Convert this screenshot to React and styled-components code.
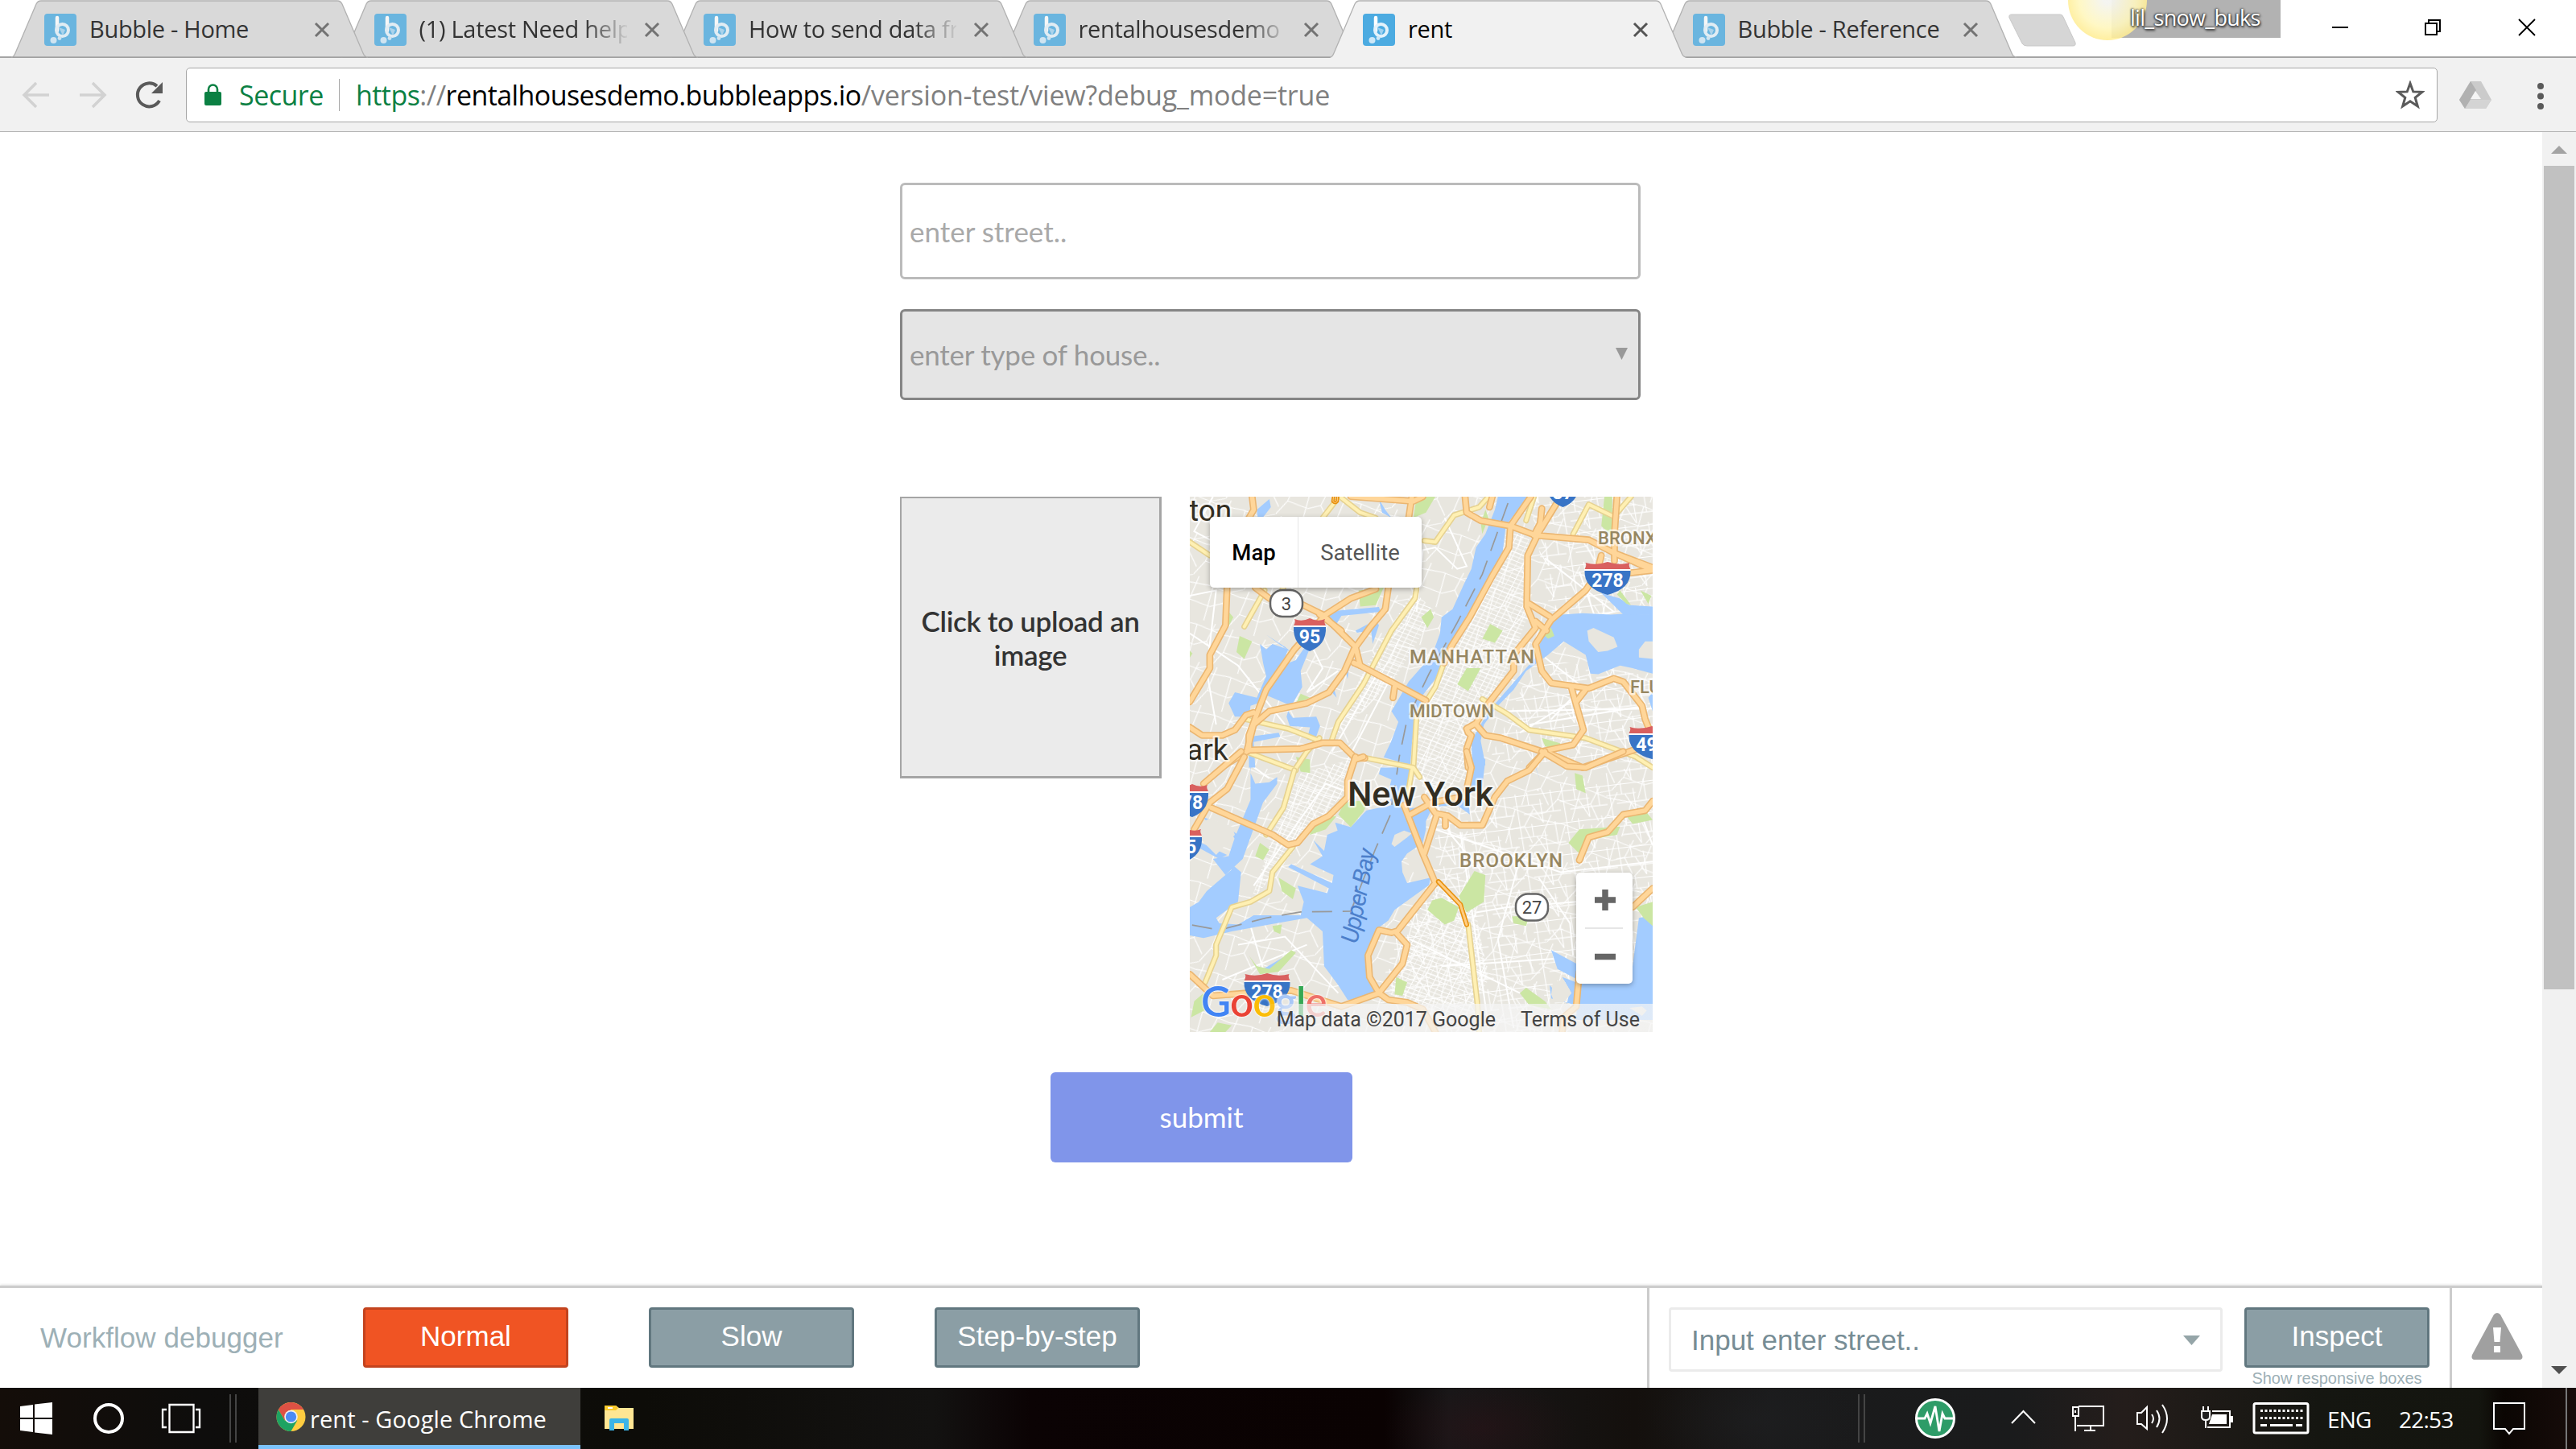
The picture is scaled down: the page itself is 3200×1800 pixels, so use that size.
import React, { useState } from 'react';
import styled, { createGlobalStyle } from 'styled-components';

const GlobalStyle = createGlobalStyle`
  * {
    box-sizing: border-box;
  }
  body {
    margin: 0;
    background: #fff;
    overflow: hidden;
  }
`;

const systemFont = "'Open Sans', 'Noto Sans', sans-serif";
const pageFont = "Lato, sans-serif";
const debugFont = "'Liberation Sans', Arial, sans-serif";
const mapFont = "Roboto, sans-serif";

const Screen = styled.div`
  width: 3200px;
  height: 1800px;
  display: flex;
  flex-direction: column;
  overflow: hidden;
  font-family: ${systemFont};
`;

/* ---------- tab strip ---------- */

const TabStrip = styled.div`
  position: relative;
  height: 72px;
  flex: none;
  display: flex;
  padding-left: 14px;
  background: linear-gradient(#fff 70px, #a5a5a5 70px);
`;

const TabBox = styled.div`
  position: relative;
  z-index: ${(props) => (props.$active ? 20 : 10 - props.$order)};
  width: 443px;
  height: 72px;
  flex: none;
  margin-right: -33.5px;
  padding: 0 40px 0 41px;
  display: flex;
  align-items: center;
`;

const TabShape = styled.svg`
  position: absolute;
  left: 0;
  top: 0;
`;

const Favicon = styled.svg`
  position: relative;
  flex: none;
  margin-top: 2px;
  opacity: ${(props) => (props.$active ? 1 : 0.78)};
`;

const TabTitle = styled.span`
  position: relative;
  width: 258px;
  margin-left: 16px;
  overflow: hidden;
  white-space: nowrap;
  font-size: 29px;
  line-height: 70px;
  letter-spacing: -0.3px;
  color: ${(props) => (props.$active ? '#000' : '#333')};
  ${(props) => props.$fade && 'mask-image: linear-gradient(to right, #000 205px, transparent 262px);'}
`;

const TabClose = styled.svg`
  position: relative;
  flex: none;
  margin: 2px 0 0 21px;
`;

const NewTab = styled.svg`
  flex: none;
  margin: 17px 0 0 24px;
`;

const UserBadge = styled.div`
  position: absolute;
  left: 2623px;
  top: 0;
  width: 210px;
  height: 47px;
  background: #b2b2b2;
`;

const BadgeName = styled.span`
  position: absolute;
  left: 2646px;
  top: 0;
  color: #fff;
  font-size: 27px;
  line-height: 43px;
  letter-spacing: -0.7px;
  text-shadow: 0 0 3px #333, 1px 2px 3px #333, -1px 0 2px #444;
`;

const BadgeOrb = styled.div`
  position: absolute;
  left: 2569px;
  top: -49px;
  width: 98px;
  height: 99px;
  border-radius: 50%;
  background: radial-gradient(circle at 50% 48%, rgba(244, 244, 240, 0.95) 8%, rgba(255, 247, 190, 0.9) 50%, rgba(255, 226, 105, 0.85) 92%, #e8c35c 100%);
`;

const WindowButtons = styled.svg`
  margin-left: auto;
  flex: none;
`;

/* ---------- toolbar ---------- */

const Toolbar = styled.div`
  height: 92px;
  flex: none;
  display: flex;
  align-items: center;
  background: #f1f1f1;
  border-bottom: 1px solid #b4b4b4;
`;

const NavIcons = styled.svg`
  flex: none;
`;

const Omnibox = styled.div`
  width: 2797px;
  height: 68px;
  padding-left: 22px;
  display: flex;
  align-items: center;
  background: #fff;
  border: 1px solid #a6a6a6;
  border-radius: 5px;
  font-size: 34px;
  white-space: nowrap;
`;

const Secure = styled.span`
  width: 124px;
  margin-left: 22px;
  color: #0b8043;
  letter-spacing: -0.5px;
`;

const OmniDivider = styled.span`
  width: 1px;
  height: 40px;
  background: #a6a6a6;
`;

const Url = styled.span`
  margin-left: 20px;
  color: #808080;
  letter-spacing: -0.55px;
`;

const Scheme = styled.span`
  color: #0b8043;
`;

const Host = styled.span`
  color: #000;
  letter-spacing: -0.58px;
`;

const UrlPath = styled.span`
  letter-spacing: -0.2px;
`;

const StarIcon = styled.svg`
  margin: 0 15px 0 auto;
`;

/* ---------- page ---------- */

const Viewport = styled.div`
  height: 1560px;
  flex: none;
  display: flex;
`;

const Page = styled.div`
  width: 3158px;
  display: flex;
  flex-direction: column;
`;

const Form = styled.form`
  height: 1433px;
  padding: 63px 0 0 1118px;
  display: flex;
  flex-direction: column;
  align-items: flex-start;
  font-family: ${pageFont};
  font-size: 35px;
`;

const StreetInput = styled.input`
  width: 920px;
  height: 120px;
  padding: 0 9px;
  border: 3px solid #bbb;
  border-radius: 6px;
  outline: none;
  font: inherit;
  background: #fff;
  &::placeholder {
    color: #a9a9a9;
    opacity: 1;
  }
`;

const HouseSelect = styled.div`
  width: 920px;
  height: 113px;
  margin-top: 37px;
  padding: 0 13px 2px 9px;
  display: flex;
  align-items: center;
  justify-content: space-between;
  border: 3px solid #858585;
  border-radius: 6px;
  background: #e5e5e5;
  color: #999;
  letter-spacing: -0.25px;
`;

const MediaRow = styled.div`
  margin-top: 120px;
  display: flex;
  align-items: flex-start;
  gap: 35px;
`;

const Upload = styled.div`
  width: 325px;
  height: 350px;
  padding: 0 20px;
  display: flex;
  align-items: center;
  text-align: center;
  border: 2px solid #a5a5a5;
  border-right-width: 3px;
  border-bottom-width: 3px;
  background: #ebebeb;
  color: #333;
  font-weight: 600;
  line-height: 42px;
  letter-spacing: -0.32px;
`;

const Submit = styled.button`
  width: 375px;
  height: 112px;
  margin: 50px 0 0 187px;
  padding: 0 0 2px;
  border: none;
  border-radius: 6px;
  background: #8095ea;
  color: #fff;
  font: inherit;
`;

/* ---------- map ---------- */

const MapFrame = styled.div`
  position: relative;
  width: 575px;
  height: 665px;
  overflow: hidden;
  background: #e8e6df;
  font-family: ${mapFont};
`;

const MapCanvas = styled.svg`
  position: absolute;
  inset: 0;
`;

const MapTypes = styled.div`
  position: absolute;
  left: 25px;
  top: 25px;
  height: 88px;
  display: flex;
  border-radius: 5px;
  background: #fff;
  box-shadow: 0 2px 6px rgba(0, 0, 0, 0.3);
`;

const MapType = styled.div`
  width: ${(props) => (props.$active ? 109 : 154)}px;
  line-height: 89px;
  text-align: center;
  font-size: 27.5px;
  font-weight: ${(props) => (props.$active ? 500 : 400)};
  color: ${(props) => (props.$active ? '#000' : '#565656')};
  border-left: ${(props) => (props.$active ? 'none' : '1px solid #e6e6e6')};
`;

const ZoomControl = styled.div`
  position: absolute;
  left: 480px;
  top: 467px;
  width: 70px;
  height: 138px;
  border-radius: 5px;
  background: #fff;
  box-shadow: 0 2px 6px rgba(0, 0, 0, 0.3);
`;

const GoogleMark = styled.div`
  position: absolute;
  left: 14px;
  top: 593px;
  font-family: ${pageFont};
  font-weight: 600;
  font-size: 51px;
  line-height: 68px;
  letter-spacing: -0.9px;
  text-shadow: 0 0 2px #fff, 0 0 3px #fff;
`;

const Letter = styled.span`
  color: ${(props) => props.$color};
`;

const Attribution = styled.div`
  position: absolute;
  right: 0;
  bottom: 0;
  width: 480px;
  height: 35px;
  padding-right: 16px;
  display: flex;
  justify-content: flex-end;
  gap: 31px;
  background: linear-gradient(to right, rgba(245, 245, 245, 0), rgba(245, 245, 245, 0.72) 50px);
  color: #444;
  font-size: 25px;
  line-height: 40px;
  white-space: nowrap;
`;

/* ---------- scrollbar ---------- */

const Scrollbar = styled.div`
  width: 42px;
  padding: 17px 2px;
  display: flex;
  flex-direction: column;
  align-items: center;
  background: #f1f1f1;
`;

const Thumb = styled.div`
  width: 38px;
  height: 1023px;
  margin-top: 15px;
  background: #c1c1c1;
`;

const DownArrow = styled.svg`
  margin-top: auto;
`;

/* ---------- workflow debugger ---------- */

const Debugger = styled.div`
  height: 127px;
  display: flex;
  border-top: 3px solid #ccc;
  box-shadow: 0 -1px 3px rgba(0, 0, 0, 0.12);
  background: #fff;
  font-family: ${debugFont};
  font-size: 35px;
`;

const DebugTitle = styled.div`
  width: 401px;
  margin-left: 50px;
  line-height: 124px;
  letter-spacing: 0.05px;
  color: #9db0b6;
`;

const DebugButton = styled.button`
  width: ${(props) => props.$width || 255}px;
  height: 75px;
  margin: 24px ${(props) => (props.$width ? 0 : 100)}px 0 0;
  padding: 0 0 4px;
  border: 3px solid ${(props) => (props.$active ? '#c3431e' : '#61777f')};
  border-radius: 4px;
  background: ${(props) => (props.$active ? '#f05423' : '#8b9ea5')};
  color: #fff;
  font: inherit;
`;

const InspectPane = styled.div`
  width: 1000px;
  margin-left: auto;
  padding-left: 24px;
  display: flex;
  border-left: 3px solid #ccc;
  border-right: 3px solid #ccc;
`;

const ElementSelect = styled.div`
  width: 688px;
  height: 80px;
  margin: 24px 27px 0 0;
  padding: 1px 25px 0 25px;
  display: flex;
  align-items: center;
  justify-content: space-between;
  border: 3px solid #ebebeb;
  border-radius: 4px;
  color: #778d95;
`;

const InspectColumn = styled.div`
  display: flex;
  flex-direction: column;
  align-items: center;
`;

const ResponsiveLink = styled.div`
  margin-top: 2px;
  font-size: 20px;
  line-height: 22px;
  color: #9db0b6;
`;

const IssueCell = styled.div`
  width: 112px;
  padding: 30px 0 0 24px;
`;

/* ---------- taskbar ---------- */

const Taskbar = styled.div`
  height: 76px;
  flex: none;
  display: flex;
  background:
    radial-gradient(ellipse 120px 60px at 1840px 50px, rgba(60, 16, 24, 0.3), transparent),
    radial-gradient(ellipse 130px 70px at 2180px 40px, rgba(32, 33, 35, 0.5), transparent),
    linear-gradient(to right, #140d09 0, #0e0d0c 250px, #0d0c08 800px, #131211 1160px, #0b0304 1280px, #0a0202 1720px, #171718 1800px, #14100d 2030px, #1a1a1b 2200px, #1a1b1c 2500px, #241d1b 2640px, #151611 2880px, #14150f 3080px, #0b0603 3110px, #170c0a 3200px);
  color: #fff;
`;

const TaskIcons = styled.svg`
  flex: none;
`;

const ActiveTask = styled.div`
  width: 400px;
  height: 76px;
  padding: 5px 0 0 22px;
  display: flex;
  align-items: center;
  gap: 5px;
  border-bottom: 5px solid #7cc2fb;
  background: #3f3e3b;
  font-size: 29px;
  letter-spacing: 0.1px;
  white-space: nowrap;
`;

const ChromeLogo = styled.svg`
  flex: none;
  margin-top: -5px;
`;

const Tray = styled.div`
  margin-left: auto;
  display: flex;
  font-size: 28px;
  line-height: 78px;
`;

const TrayText = styled.span`
  width: ${(props) => props.$width}px;
  letter-spacing: -0.8px;
`;

const tabs = [
  { title: 'Bubble - Home' },
  { title: '(1) Latest Need help', fade: true },
  { title: 'How to send data from', fade: true },
  { title: 'rentalhousesdemo -', fade: true },
  { title: 'rent', active: true },
  { title: 'Bubble - Reference' },
];

const BubbleIcon = ({ active }) => (
  <Favicon width="40" height="40" viewBox="0 0 40 40" $active={active}>
    <rect width="40" height="40" rx="4" fill="#4cabe1" />
    <path d="M16 5v16" stroke="#fff" strokeWidth="4.5" strokeLinecap="round" />
    <circle cx="22.500" cy="20.500" r="7.5" fill="none" stroke="#e4f2fb" strokeWidth="4" />
    <path d="M18 17l8 3-3 7" fill="#9fd2f1" />
    <circle cx="11.5" cy="33" r="4" fill="#cde8f8" />
    <circle cx="19" cy="30.500" r="2.400" fill="#cde8f8" />
  </Favicon>
);

const Tab = ({ title, active, fade, order }) => (
  <TabBox $active={active} $order={order}>
    <TabShape width="443" height="72" viewBox="0 0 443 72">
      <path
        d={active ? 'M0 72Q3 71 5 66L31 5Q33 1 37 1H405Q409 1 411 5L437 66Q439 71 443 72Z' : 'M0 71Q3 71 5 66L31 5Q33 1 37 1H405Q409 1 411 5L437 66Q439 71 443 71Z'}
        fill={active ? '#f1f1f1' : '#d9d9d9'}
      />
      <path d="M0 71Q3 71 5 66L31 5Q33 1 37 1H405Q409 1 411 5L437 66Q439 71 443 71" fill="none" stroke="#b1b1b1" strokeWidth="1.3" />
      {!active && <path d="M2 71H441" stroke="#a0a0a0" strokeWidth="1.500" />}
    </TabShape>
    <BubbleIcon active={active} />
    <TabTitle $active={active} $fade={fade}>{title}</TabTitle>
    <TabClose width="20" height="20" viewBox="0 0 20 20">
      <path d="M2 2L18 18M18 2L2 18" stroke={active ? '#555' : '#737373'} strokeWidth="3" />
    </TabClose>
  </TabBox>
);

// Map geometry. The lower half is drawn in a group shifted down by 1020.
const waterTop = [
  'M1030 51L1020 100L990 190L960 240L945 320L920 380L885 470L850 500L845 560L820 640L775 700L745 740L715 800L690 850L712 890L690 960L665 1022L750 1050L756 960L775 870L790 790L850 700L890 600L940 500L980 410L1010 350L1045 260L1055 160L1100 90L1125 51Z',
  'M1180 540L1235 490L1300 485L1390 490L1420 488L1524 490V710L1460 690L1420 680L1350 712L1325 710L1310 640L1240 590L1190 640L1120 700L1080 770L1030 830L985 900L975 960L990 1050L950 1080L945 960L1000 850L1060 770L1150 650Z',
  'M1360 410L1420 430L1450 455L1524 460V492L1430 490Z',
  'M270 600L290 620L310 600L360 620L340 680L385 660L420 600L435 600L400 700L405 760L370 830L290 790L265 820L240 830L235 870L190 870L170 820L190 780L260 800L290 720L280 670Z',
  'M290 565L380 640L350 610Z',
  'M360 850L375 875L450 870L462 905L445 960L420 955L430 910L365 905L355 870Z',
  'M480 500L520 475L650 462L655 480L530 495L515 525L500 520Z',
  'M575 550L640 510L650 530L630 600L625 550L580 558Z',
  'M260 100L300 60L305 90L265 150ZM650 60L660 110L690 130L670 100Z',
  'M500 740L515 800L500 780ZM540 690L555 680L550 730Z',
  'M1510 800L1524 780V850Z',
  'M235 945L330 930L335 945L250 965L255 1060L235 1060Z',
];

const waterBottom = [
  'M655 40L650 65L690 85L680 130L690 180L610 200L560 262L510 245L518 275L485 290L475 350L440 310L470 370L430 400L505 440L500 470L370 400L360 410L490 490L485 508L390 480L330 450L390 480L410 540L400 590L250 590L200 625L140 620L130 600L200 540L210 430L170 390L180 420L100 500L75 540L46 560V665L90 675L180 650L300 625L420 600L470 650L475 780L520 850L550 905L600 905L640 870L615 800L612 720L645 640L680 610L700 570L810 478L815 450L740 470L725 430L722 390L740 360L790 320L800 270L800 240L820 190L735 190L755 40Z',
  'M245 -10L240 60L255 100L300 95L325 75L325 100L280 170L215 380L160 440L120 380L170 370L190 300L240 160L240 0Z',
  'M90 225L150 250L200 290L190 305L165 265L95 235Z',
  'M46 300L165 365L140 380L46 320Z',
  'M950 -30L990 10L980 110L935 140L940 215L900 180L840 185L845 165L930 150L950 70Z',
  'M1140 0L1165 90L1150 40Z',
  'M1480 600L1524 590V980H1280L1285 830L1220 790L1200 720L1280 770L1460 780Z',
  'M1195 850L1200 900L1280 925V840L1235 820L1260 870L1250 920Z',
  'M280 790L370 730L375 740L350 770L345 760L285 805Z',
];

const islands = [
  'M1315 550L1335 540L1400 575L1412 610L1380 625L1350 630L1320 590Z',
  'M1480 620L1500 590L1524 590V655L1480 650Z',
  'M700 1310L730 1295L755 1305L740 1320L700 1355L690 1345Z',
  'M740 1395L770 1365L800 1400L820 1450L780 1470L750 1440Z',
  'M1205 1860L1240 1850L1265 1900L1240 1935L1210 1935L1200 1905Z',
  'M1450 1955L1490 1950L1505 1965L1490 1985Z',
  'M110 1250L180 1280L190 1310L130 1385L100 1350L60 1300L90 1260Z',
];

const parks = [
  'M585 400L665 390L640 455L590 460Z', 'M1005 525L1045 550L1020 595L980 580Z',
  'M930 690L975 690L935 775L900 750Z', 'M205 570L245 590L220 655L195 630Z',
  'M785 500L815 470L825 500L805 540Z', 'M1370 51H1395V200L1360 160Z',
  'M770 51H830L800 110L760 130Z', 'M990 100L1000 130L980 190L975 150Z',
  'M1420 400L1455 455L1440 450L1410 415ZM1485 400L1520 420L1510 450Z',
  'M1160 550L1200 540L1210 570L1190 580Z', 'M400 785L430 800L385 820Z',
  'M540 1190L620 1180L600 1225L560 1282L520 1235Z', 'M955 1445L990 1460L985 1560L930 1600L905 1540Z',
  'M820 1555L850 1545L905 1580L890 1630L860 1645L805 1590Z', 'M255 1390L270 1340L300 1365L280 1405Z',
  'M430 1290L460 1250L515 1240L480 1290L430 1310Z', 'M330 1470L385 1510L375 1550L340 1520Z',
  'M705 1840L740 1860L725 1910L700 1905Z', 'M1255 1340L1290 1290L1420 1280L1410 1310L1320 1330L1290 1380Z',
  'M1100 1900L1120 1880L1180 1930L1200 1960L1130 1945Z', 'M385 1020L430 1030L430 1080L400 1075Z',
  'M50 1990L60 1930L90 1900L100 1960ZM110 2045L135 2010L180 2020L160 2045Z',
  'M1275 1080L1300 1090L1310 1155L1280 1140ZM1440 1240L1500 1220L1524 1255L1460 1270Z',
  'M1470 1580L1524 1560V1650L1495 1620Z', 'M235 1760L260 1800L300 1810L370 1740L385 1750L330 1820L270 1830Z',
  'M310 1650L340 1645L335 1680L315 1670Z', 'M1075 1615L1130 1610L1120 1650L1080 1640Z',
  'M1170 950L1230 970L1220 1000L1180 980Z', 'M46 625L55 635L46 650ZM170 480L185 500L165 545Z',
];

const highwaysTop = [
  'M1135 51L1070 160L1065 240L1010 350L940 500L880 610L858 670',
  'M925 51L930 110L975 140L1070 160L1150 195L1320 212L1400 260L1524 315',
  'M1215 80L1160 185L1125 270L1122 460L1150 540L1080 640L1080 700L1000 820L960 895L930 915L935 930L945 940L930 990L935 1060',
  'M1170 95L1165 150L1145 195', 'M1012 51L1003 90', 'M1410 51L1402 190V290',
  'M1360 270L1345 340L1310 400L1200 510L1150 600L1170 700L1200 745L1320 765L1400 728L1430 740L1490 830L1500 880L1524 950',
  'M1265 765L1303 920L1270 975L1170 1000L1040 950L990 940L960 900', 'M1310 770L1280 815',
  'M1130 450L1195 497', 'M1150 515L1185 550', 'M1400 260L1524 325L1450 335',
  'M245 51L250 100L235 130', 'M165 390L160 530L110 640L110 690L46 815',
  'M255 390L300 430', 'M400 450L470 490L575 610L590 680L720 760L800 810', 'M460 490L530 550M700 760L695 800M590 680L570 670',
  'M755 51L745 130', 'M680 390L670 470L620 540L570 620L540 700L490 780L420 820L300 850L250 900L230 990',
  'M640 395L560 430L480 490L380 620L290 770L260 860L235 940V995L160 1050',
  'M46 910L85 940L150 940L190 920L225 865L250 855',
  'M235 995L400 990L470 968L525 968L575 1025H605', 'M560 50L760 68L790 51', 'M1524 970L1300 1060L1180 1000L1130 1060',
];

const highwaysBottom = [
  'M575 0L550 90V150L490 220L440 250L390 320L360 328L310 290L115 190', 'M600 0L575 10',
  'M1180 -20L1130 50L1060 90L1020 150L980 255H910L870 220L830 210L795 150',
  'M1170 -20L1250 35L1310 40L1430 -20',
  'M730 180L740 210L790 360L830 470L705 655L740 700L725 770L650 880L620 820L615 740L650 645L690 655L705 650',
  'M835 215L795 360', 'M750 215L820 170L910 150', 'M862 220V258', 'M930 -20L945 40L925 150',
  'M46 810L120 890L230 880L370 870L530 930L650 880L680 905L740 915L790 940L830 1025',
  'M1290 385L1320 300L1380 280L1430 215L1500 200L1524 165', 'M1524 490L1460 560', 'M1290 800L1280 930L1240 970L1235 1025',
  'M220 0L165 120L110 170L60 270', 'M210 -20L90 100',
];

const mainStreetsTop = [
  'M46 220L110 270', 'M285 400L220 535', 'M345 390L335 410', 'M770 395L765 430L690 550L600 750L520 890L500 955',
  'M856 675L830 760L770 870L760 1060', 'M795 215L830 220L890 120L970 90L1000 51', 'M530 55L590 110L640 130',
  'M510 70L470 130', 'M1145 51L1120 140', 'M1455 51L1400 125L1320 80L1270 190', 'M980 805L1060 860L1130 920L1310 950L1470 1020L1524 1060',
  'M225 880L360 915L460 960', 'M460 950L420 1000L380 1070', 'M235 1005L385 1070',
];

const mainStreetsBottom = [
  'M935 625L965 925L970 1025', 'M380 50L345 190L290 290', 'M375 335L310 430L300 500L240 540L180 560L130 700V740L95 840',
  'M610 5L760 40L780 75', 'M755 50L735 190',
];

const minorStreets = [
  'M46 420L130 400L100 700L130 900', 'M120 51L60 180L140 230', 'M46 560L200 680L350 900', 'M400 520L470 690L420 780L520 700',
  'M860 130L930 310L900 320L830 240L790 250L770 480', 'M1180 280L1400 480L1340 500L1290 330', 'M1180 650L1300 760L1200 880',
  'M1040 850L1524 840', 'M1130 900L1500 830M1100 930L1340 760', 'M790 1090L880 1310L980 1450', 'M830 1290L1230 1450L1524 1410',
  'M1480 1210L1524 1350', 'M960 1600L1060 1580L1280 1560', 'M850 1800L1240 1770', 'M910 1300L960 1700L1000 2030',
  'M200 1720L350 1690L520 1900', 'M150 1850L420 1720M240 1650L290 1850', 'M750 1700L1100 1900', 'M1100 1400L1030 1700L1080 2030',
  'M1160 1470L1260 1640L1270 1760', 'M620 1180L480 1120L400 1250L250 1500', 'M650 700L500 1000M690 720L560 1010', 'M300 1100L240 1050',
];

const Roads = ({ paths, color, edge, width }) => (
  <>
    {paths.map((d) => <path key={`edge-${d}`} d={d} stroke={edge} strokeWidth={width + 3.2} vectorEffect="non-scaling-stroke" />)}
    {paths.map((d) => <path key={d} d={d} stroke={color} strokeWidth={width} vectorEffect="non-scaling-stroke" />)}
  </>
);

const Interstate = ({ x, y, width = 57, label }) => (
  <g transform={`translate(${x} ${y})`}>
    <path
      d={`M${-width / 2} 9Q${-width / 2 + 3} 4 ${-width / 2 + 1} 1Q${-width / 4} 5 0 0Q${width / 4} 5 ${width / 2 - 1} 1Q${width / 2 - 3} 4 ${width / 2} 9Z`}
      fill="#d9605f"
    />
    <path d={`M${-width / 2} 11H${width / 2}Q${width / 2 + 1} 33 0 41Q${-width / 2 - 1} 33 ${-width / 2} 11Z`} fill="#3874c6" />
    <path d={`M${-width / 2} 10H${width / 2}`} stroke="#fff" strokeWidth="2" />
    <text y="31" fontSize="23" fontWeight="700" fill="#fff" stroke="none" textAnchor="middle">{label}</text>
  </g>
);

const RouteSign = ({ x, y, label }) => (
  <g transform={`translate(${x} ${y})`}>
    <rect x="-20" y="-16.500" width="40" height="33" rx="15" fill="#fff" stroke="#666" strokeWidth="2.500" />
    <text y="8" fontSize="22" fill="#444" textAnchor="middle">{label}</text>
  </g>
);

const CityMap = () => (
  <MapFrame>
    <MapCanvas width="575" height="665" viewBox="46 51 1478 1994" preserveAspectRatio="none">
      <defs>
        <pattern id="avenues" width="62" height="30" patternUnits="userSpaceOnUse" patternTransform="rotate(24)">
          <path d="M0 0V30M22 0V30M41 0V30M0 4H62M0 19H62" stroke="#fff" strokeWidth="2.700" fill="none" />
        </pattern>
        <pattern id="blocks" width="150" height="118" patternUnits="userSpaceOnUse" patternTransform="rotate(-8)">
          <path d="M0 10H150M0 48H95M30 80H150M12 0V118M50 0V48M88 30V118M125 0V80M60 48L88 118" stroke="#fff" strokeWidth="3" fill="none" />
        </pattern>
        <pattern id="suburbs" width="170" height="150" patternUnits="userSpaceOnUse" patternTransform="rotate(20)">
          <path d="M0 30L70 20L170 30M20 0V90L0 150M75 20L90 150M130 0L125 70L170 120M20 90L90 95L125 70M170 0L130 25" stroke="#fff" strokeWidth="3" fill="none" />
        </pattern>
      </defs>
      <rect x="46" y="51" width="1478" height="1994" fill="#e8e6df" />
      <rect x="46" y="51" width="1478" height="1994" fill="url(#suburbs)" />
      <path d="M830 1230L1524 1040V1800L1240 2045H830L650 1900L720 1640L830 1480Z" fill="url(#blocks)" />
      <path d="M1130 51H1524V480L1200 500ZM1150 650L1524 720V1040L1000 1040Z" fill="url(#blocks)" />
      <path d="M1060 180L1130 200L1130 480L1060 700L960 880L940 1100L800 1160L760 1050L770 880Z" fill="url(#avenues)" />
      <path d="M760 400L830 480L700 730L500 960L600 700ZM400 1080L560 1030L540 1150L240 1560L330 1250Z" fill="url(#avenues)" />
      <path d="M840 1500L960 1600L1000 1850L900 2045L680 1900L740 1700Z" fill="url(#avenues)" />
      <g fill="none" stroke="#fff" strokeWidth="2">
        {minorStreets.map((d) => <path key={d} d={d} vectorEffect="non-scaling-stroke" />)}
      </g>
      <g fill="#a3ccff">
        {waterTop.map((d) => <path key={d} d={d} />)}
        <g transform="translate(0 1020)">
          {waterBottom.map((d) => <path key={d} d={d} />)}
        </g>
      </g>
      <g fill="#e8e6df">{islands.map((d) => <path key={d} d={d} />)}</g>
      <g fill="#cbe6a3">{parks.map((d) => <path key={d} d={d} />)}</g>
      <path
        d="M1062 75L980 340L900 520L810 710L740 880L715 1020L705 1100L685 1240L640 1360L560 1595L400 1598L290 1620L140 1665L46 1645"
        fill="none" stroke="#999" strokeWidth="1.700" strokeDasharray="25 13" vectorEffect="non-scaling-stroke"
      />
      <g fill="none" strokeLinejoin="round" strokeLinecap="round">
        <Roads paths={mainStreetsTop} color="#fff0b3" edge="#e6d291" width={4} />
        <g transform="translate(0 1020)">
          <Roads paths={mainStreetsBottom} color="#fff0b3" edge="#e6d291" width={4} />
        </g>
        <Roads paths={highwaysTop} color="#ffd699" edge="#ebb671" width={5.5} />
        <g transform="translate(0 1020)">
          <Roads paths={highwaysBottom} color="#ffd699" edge="#ebb671" width={5.5} />
          <Roads paths={['M840 465L910 550L930 625']} color="#ffcc80" edge="#e8920f" width={3} />
        </g>
        <Roads paths={['M505 51L503 68Q510 78 517 68L518 51']} color="#ffcc80" edge="#e8920f" width={1} />
      </g>
    </MapCanvas>
    <MapCanvas width="575" height="665" viewBox="1478 617 575 665" fontFamily="Roboto, sans-serif">
      <Interstate x={1997} y={698} label="278" />
      <Interstate x={1627} y={768} width={40} label="95" />
      <Interstate x={1941.5} y={589} width={40} label="87" />
      <Interstate x={2052} y={902} label="495" />
      <Interstate x={1481} y={974} width={40} label="78" />
      <Interstate x={1473} y={1029} width={40} label="95" />
      <Interstate x={1574} y={1209} label="278" />
      <RouteSign x={1598} y={749.5} label="3" />
      <RouteSign x={1903} y={1127} label="27" />
      <g paintOrder="stroke" stroke="#fff" strokeOpacity="0.65" strokeWidth="5" strokeLinejoin="round">
        <g fill="#332e22" fontSize="37">
          <text x="1477" y="647">ton</text>
          <text x="1474" y="944">ark</text>
          <text x="1674" y="1001" fontSize="43" fontWeight="500" textLength="181">New York</text>
        </g>
        <g fill="#968661" fontWeight="500" fontSize="24">
          <text x="1751" y="824" textLength="155">MANHATTAN</text>
          <text x="1751" y="891" fontSize="22.500" textLength="105">MIDTOWN</text>
          <text x="1985" y="676" fontSize="22">BRONX</text>
          <text x="2025" y="861" fontSize="22">FLUSHING</text>
          <text x="1813" y="1077" textLength="128">BROOKLYN</text>
        </g>
      </g>
      <text transform="translate(1686 1173) rotate(-79)" fontSize="30" fontStyle="italic" fill="#4c7fcb" textLength="119">Upper Bay</text>
    </MapCanvas>
    <MapTypes>
      <MapType $active>Map</MapType>
      <MapType>Satellite</MapType>
    </MapTypes>
    <GoogleMark>
      <Letter $color="#4285f4">G</Letter>
      <Letter $color="#ea4335">o</Letter>
      <Letter $color="#fbbc05">o</Letter>
      <Letter $color="#a9c7f7">g</Letter>
      <Letter $color="#34a853">l</Letter>
      <Letter $color="#ee7168">e</Letter>
    </GoogleMark>
    <Attribution>
      <span>Map data ©2017 Google</span>
      <span>Terms of Use</span>
    </Attribution>
    <ZoomControl>
      <svg width="70" height="138" viewBox="0 0 70 138">
        <path d="M23 34H49M36 21V47M23 104.500H49" stroke="#666" strokeWidth="7.500" />
        <path d="M11 69H58" stroke="#e6e6e6" strokeWidth="2" />
      </svg>
    </ZoomControl>
  </MapFrame>
);

const ChromeIcon = () => (
  <ChromeLogo width="37" height="38" viewBox="-19 -19 38 38">
    <circle r="18.500" fill="#ffcd40" />
    <path d="M-16 -9.250A18.500 18.500 0 0 1 16 -9.250H0L-8 4.600Z" fill="#dd5144" />
    <path d="M-16 -9.250A18.500 18.500 0 0 0 0 18.500L8 4.600L-8 4.600Z" fill="#1da362" />
    <circle r="8.500" fill="#f1f1f1" />
    <circle r="6.800" fill="#4c8bf5" />
  </ChromeLogo>
);

const App = () => {
  const [street, setStreet] = useState('');
  const [speed, setSpeed] = useState('Normal');

  return (
    <Screen>
      <GlobalStyle />
      <TabStrip>
        {tabs.map((tab, i) => <Tab key={tab.title} order={i} {...tab} />)}
        <NewTab width="84" height="42" viewBox="0 0 84 42">
          <path d="M4 1H64Q67 1 68 4L83 36Q84 40 80 40H23Q19 40 17 37L1 5Q0 1 4 1Z" fill="#d6d6d6" stroke="#c8c8c8" />
        </NewTab>
        <UserBadge />
        <BadgeOrb />
        <BadgeName>lil_snow_buks</BadgeName>
        <WindowButtons width="310" height="70" viewBox="2890 0 310 70">
          <path d="M2897 34H2917" stroke="#000" strokeWidth="2" />
          <path d="M3013 29H3027V43H3013ZM3017 29V25H3031V39H3027" fill="none" stroke="#000" strokeWidth="2" />
          <path d="M3129 24L3149 44M3149 24L3129 44" stroke="#000" strokeWidth="1.800" />
        </WindowButtons>
      </TabStrip>
      <Toolbar>
        <NavIcons width="231" height="90" viewBox="0 72 231 90">
          <path d="M61 117H31M45 102L30 117L45 132M99 117H129M115 102L130 117L115 132" fill="none" stroke="#d2d2d2" strokeWidth="3.500" />
          <path d="M198 124A14.500 14.500 0 1 1 195 106" fill="none" stroke="#5a5a5a" strokeWidth="4" />
          <path d="M202 101V115H188Z" fill="#5a5a5a" />
        </NavIcons>
        <Omnibox>
          <svg width="21" height="28" viewBox="0 0 21 28">
            <rect y="10" width="21" height="17" rx="2" fill="#0b8043" />
            <path d="M5 11V7a5.500 5.500 0 0 1 11 0V11" fill="none" stroke="#0b8043" strokeWidth="2.600" />
          </svg>
          <Secure>Secure</Secure>
          <OmniDivider />
          <Url>
            <Scheme>https</Scheme>://<Host>rentalhousesdemo.bubbleapps.io</Host>
            <UrlPath>/version-test/view?debug_mode=true</UrlPath>
          </Url>
          <StarIcon width="36" height="36" viewBox="0 0 36 36">
            <path d="M18 3.500L21.800 13.900L33 14.300L24.200 21.200L27.300 32L18 25.700L8.700 32L11.800 21.200L3 14.300L14.200 13.900Z" fill="none" stroke="#5a5a5a" strokeWidth="3" />
          </StarIcon>
        </Omnibox>
        <NavIcons width="171" height="90" viewBox="3028 72 171 90">
          <path d="M3069 100H3082L3095 123L3088 134H3062L3055 123Z" fill="#cbcbcb" />
          <path d="M3069 100L3055 123L3062 134L3076 111Z" fill="#b1b1b1" />
          <path d="M3075 112L3069 122H3082Z" fill="#f4f4f4" />
          <path d="M3069 123H3095L3088 134H3062Z" fill="#d4d4d4" />
          <circle cx="3156" cy="106" r="4" fill="#5a5a5a" />
          <circle cx="3156" cy="118.500" r="4" fill="#5a5a5a" />
          <circle cx="3156" cy="131" r="4" fill="#5a5a5a" />
        </NavIcons>
      </Toolbar>
      <Viewport>
        <Page>
          <Form onSubmit={(e) => e.preventDefault()}>
            <StreetInput value={street} onChange={(e) => setStreet(e.target.value)} placeholder="enter street.." />
            <HouseSelect>
              enter type of house..
              <svg width="15" height="15" viewBox="0 0 15 15"><path d="M0 0H15L7.500 15Z" fill="#999" /></svg>
            </HouseSelect>
            <MediaRow>
              <Upload>Click to upload an image</Upload>
              <CityMap />
            </MediaRow>
            <Submit type="submit">submit</Submit>
          </Form>
          <Debugger>
            <DebugTitle>Workflow debugger</DebugTitle>
            {['Normal', 'Slow', 'Step-by-step'].map((name) => (
              <DebugButton key={name} $active={speed === name} onClick={() => setSpeed(name)}>{name}</DebugButton>
            ))}
            <InspectPane>
              <ElementSelect>
                Input enter street..
                <svg width="21" height="12" viewBox="0 0 21 12"><path d="M0 0H21L10.500 12Z" fill="#95a5a8" /></svg>
              </ElementSelect>
              <InspectColumn>
                <DebugButton $width={230}>Inspect</DebugButton>
                <ResponsiveLink>Show responsive boxes</ResponsiveLink>
              </InspectColumn>
            </InspectPane>
            <IssueCell>
              <svg width="64" height="60" viewBox="0 0 64 60">
                <path d="M28 3Q32 -1 36 3L63 53Q65 59 59 59H5Q-1 59 1 53Z" fill="#a0a0a0" />
                <path d="M27 19H37L35.500 37H28.500ZM28 42H36V50H28Z" fill="#fff" />
              </svg>
            </IssueCell>
          </Debugger>
        </Page>
        <Scrollbar>
          <svg width="20" height="10" viewBox="0 0 20 10"><path d="M0 10L10 0L20 10Z" fill="#a3a3a3" /></svg>
          <Thumb />
          <DownArrow width="20" height="10" viewBox="0 0 20 10"><path d="M0 0H20L10 10Z" fill="#505050" /></DownArrow>
        </Scrollbar>
      </Viewport>
      <Taskbar>
        <TaskIcons width="321" height="76" viewBox="0 1724 321 76">
          <path d="M25 1747L41 1745V1761H25ZM43 1744.500L65 1742V1761H43ZM25 1763H41V1779L25 1777ZM43 1763H65V1782L43 1779.500Z" fill="#fff" />
          <circle cx="135" cy="1762" r="17" fill="none" stroke="#fff" strokeWidth="4" />
          <path d="M210.500 1745H240.500V1779H210.500ZM207 1751H202V1773H207M243 1751H248V1773H243" fill="none" stroke="#fff" strokeWidth="2.300" />
          <path d="M286 1732V1792M293 1732V1792" stroke="#444" strokeWidth="2" />
        </TaskIcons>
        <ActiveTask>
          <ChromeIcon />
          rent - Google Chrome
        </ActiveTask>
        <TaskIcons width="100" height="76" viewBox="721 1724 100 76">
          <path d="M751 1746H765L769 1749H787V1775H751Z" fill="#ffe693" />
          <path d="M751 1746H765L768 1749L765 1752H751Z" fill="#f9ca2d" />
          <path d="M755 1748H761V1750H755Z" fill="#fff" />
          <path d="M757 1777V1764Q757 1762 759 1762H779Q781 1762 781 1764V1777H775V1768H763V1777Z" fill="#3bb4e7" />
        </TaskIcons>
        <Tray>
          <svg width="591" height="76" viewBox="2300 1724 591 76" fill="none" stroke="#fff" strokeWidth="2">
            <path d="M2309 1732V1792M2316 1732V1792" stroke="#444" />
            <circle cx="2404" cy="1762" r="23.500" fill="#2e9c68" strokeWidth="3" />
            <path d="M2380 1762H2391L2394 1756L2398 1768L2404 1747L2409 1778L2413 1756L2416 1762H2428" strokeWidth="2.800" />
            <path d="M2499 1768L2513.500 1753L2528 1768" />
            <path d="M2582 1747H2613V1771H2580M2597 1771V1777M2589 1777H2603M2575 1748H2582V1759H2575ZM2578 1759V1778M2578 1752V1755" />
            <path d="M2655 1755H2660L2667 1748V1775L2660 1769H2655ZM2673 1757Q2677 1762 2673 1768M2679 1752Q2686 1762 2679 1773M2686 1745Q2698 1762 2686 1780" />
            <path d="M2748 1753H2770V1773H2742" />
            <path d="M2748 1757H2766V1769H2744ZM2771 1759H2774V1767H2771Z" fill="#fff" stroke="none" />
            <path d="M2737 1747V1753M2743 1747V1753M2735 1753H2745V1760Q2745 1764 2740 1764Q2735 1764 2735 1760ZM2740 1764V1774" fill="#222" />
            <rect x="2800" y="1743.500" width="67" height="36.500" rx="2" strokeWidth="3" />
            <path d="M2808 1752.500H2861M2808 1761.500H2861" strokeWidth="3" strokeDasharray="3 2.500" />
            <path d="M2808 1770.500H2816M2820 1770.500H2848M2852 1770.500H2860" strokeWidth="3" />
          </svg>
          <TrayText $width={89}>ENG</TrayText>
          <TrayText $width={112}>22:53</TrayText>
          <svg width="108" height="76" viewBox="3092 1724 108 76" fill="none" stroke="#fff" strokeWidth="2">
            <path d="M3098 1743H3136V1775H3122L3117 1781L3112 1775H3098Z" />
            <path d="M3188 1724V1800" stroke="#777" />
          </svg>
        </Tray>
      </Taskbar>
    </Screen>
  );
};

export default App;
